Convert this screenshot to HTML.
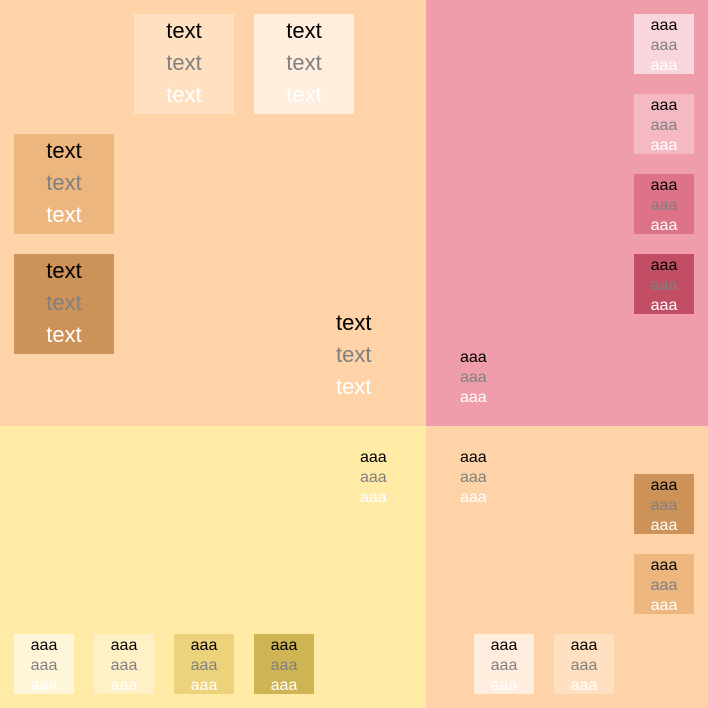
<!DOCTYPE html><html><head><style>
body{margin:0;width:708px;height:708px;position:relative;overflow:hidden;font-family:"Liberation Sans",sans-serif}
.q{position:absolute}
.b{position:absolute;text-align:center;box-sizing:border-box}
.L{width:100px;height:100px;font-size:22px;line-height:32px;padding-top:1px}
.S{width:60px;height:60px;font-size:16px;line-height:20px;padding-top:2px}
.g{color:#808080}.w{color:#fff}.k{color:#000}
.f{position:absolute;font-size:22px;line-height:32px}
.fs{position:absolute;font-size:16px;line-height:20px}
</style></head><body>
<div class="q" style="left:0;top:0;width:426px;height:426px;background:#FED3A7"></div>
<div class="q" style="left:426px;top:0;width:282px;height:426px;background:#EF9DAA"></div>
<div class="q" style="left:0;top:426px;width:426px;height:282px;background:#FFEAA6"></div>
<div class="q" style="left:426px;top:426px;width:282px;height:282px;background:#FED3A7"></div>

<div class="b L" style="left:134px;top:14px;background:#FFE1C2"><div>text</div><div class="g">text</div><div class="w">text</div></div>
<div class="b L" style="left:254px;top:14px;background:#FFEEDD"><div>text</div><div class="g">text</div><div class="w">text</div></div>
<div class="b L" style="left:14px;top:134px;background:#EDB67F"><div>text</div><div class="g">text</div><div class="w">text</div></div>
<div class="b L" style="left:14px;top:254px;background:#CD9257"><div>text</div><div class="g">text</div><div class="w">text</div></div>
<div class="f" style="left:336px;top:307px"><div>text</div><div class="g">text</div><div class="w">text</div></div>

<div class="b S" style="left:634px;top:14px;background:#F9D6DC"><div>aaa</div><div class="g">aaa</div><div class="w">aaa</div></div>
<div class="b S" style="left:634px;top:94px;background:#F5B9C3"><div>aaa</div><div class="g">aaa</div><div class="w">aaa</div></div>
<div class="b S" style="left:634px;top:174px;background:#DD7386"><div>aaa</div><div class="g">aaa</div><div class="w">aaa</div></div>
<div class="b S" style="left:634px;top:254px;background:#C14E63"><div>aaa</div><div class="g">aaa</div><div class="w">aaa</div></div>
<div class="fs" style="left:460px;top:348px"><div>aaa</div><div class="g">aaa</div><div class="w">aaa</div></div>

<div class="fs" style="left:360px;top:448px"><div>aaa</div><div class="g">aaa</div><div class="w">aaa</div></div>
<div class="fs" style="left:460px;top:448px"><div>aaa</div><div class="g">aaa</div><div class="w">aaa</div></div>
<div class="b S" style="left:634px;top:474px;background:#CD9257"><div>aaa</div><div class="g">aaa</div><div class="w">aaa</div></div>
<div class="b S" style="left:634px;top:554px;background:#EDB67F"><div>aaa</div><div class="g">aaa</div><div class="w">aaa</div></div>

<div class="b S" style="left:14px;top:634px;background:#FFF6D9"><div>aaa</div><div class="g">aaa</div><div class="w">aaa</div></div>
<div class="b S" style="left:94px;top:634px;background:#FFF1C6"><div>aaa</div><div class="g">aaa</div><div class="w">aaa</div></div>
<div class="b S" style="left:174px;top:634px;background:#EDD27C"><div>aaa</div><div class="g">aaa</div><div class="w">aaa</div></div>
<div class="b S" style="left:254px;top:634px;background:#CFB453"><div>aaa</div><div class="g">aaa</div><div class="w">aaa</div></div>
<div class="b S" style="left:474px;top:634px;background:#FFEEDD"><div>aaa</div><div class="g">aaa</div><div class="w">aaa</div></div>
<div class="b S" style="left:554px;top:634px;background:#FFE1C2"><div>aaa</div><div class="g">aaa</div><div class="w">aaa</div></div>
</body></html>
